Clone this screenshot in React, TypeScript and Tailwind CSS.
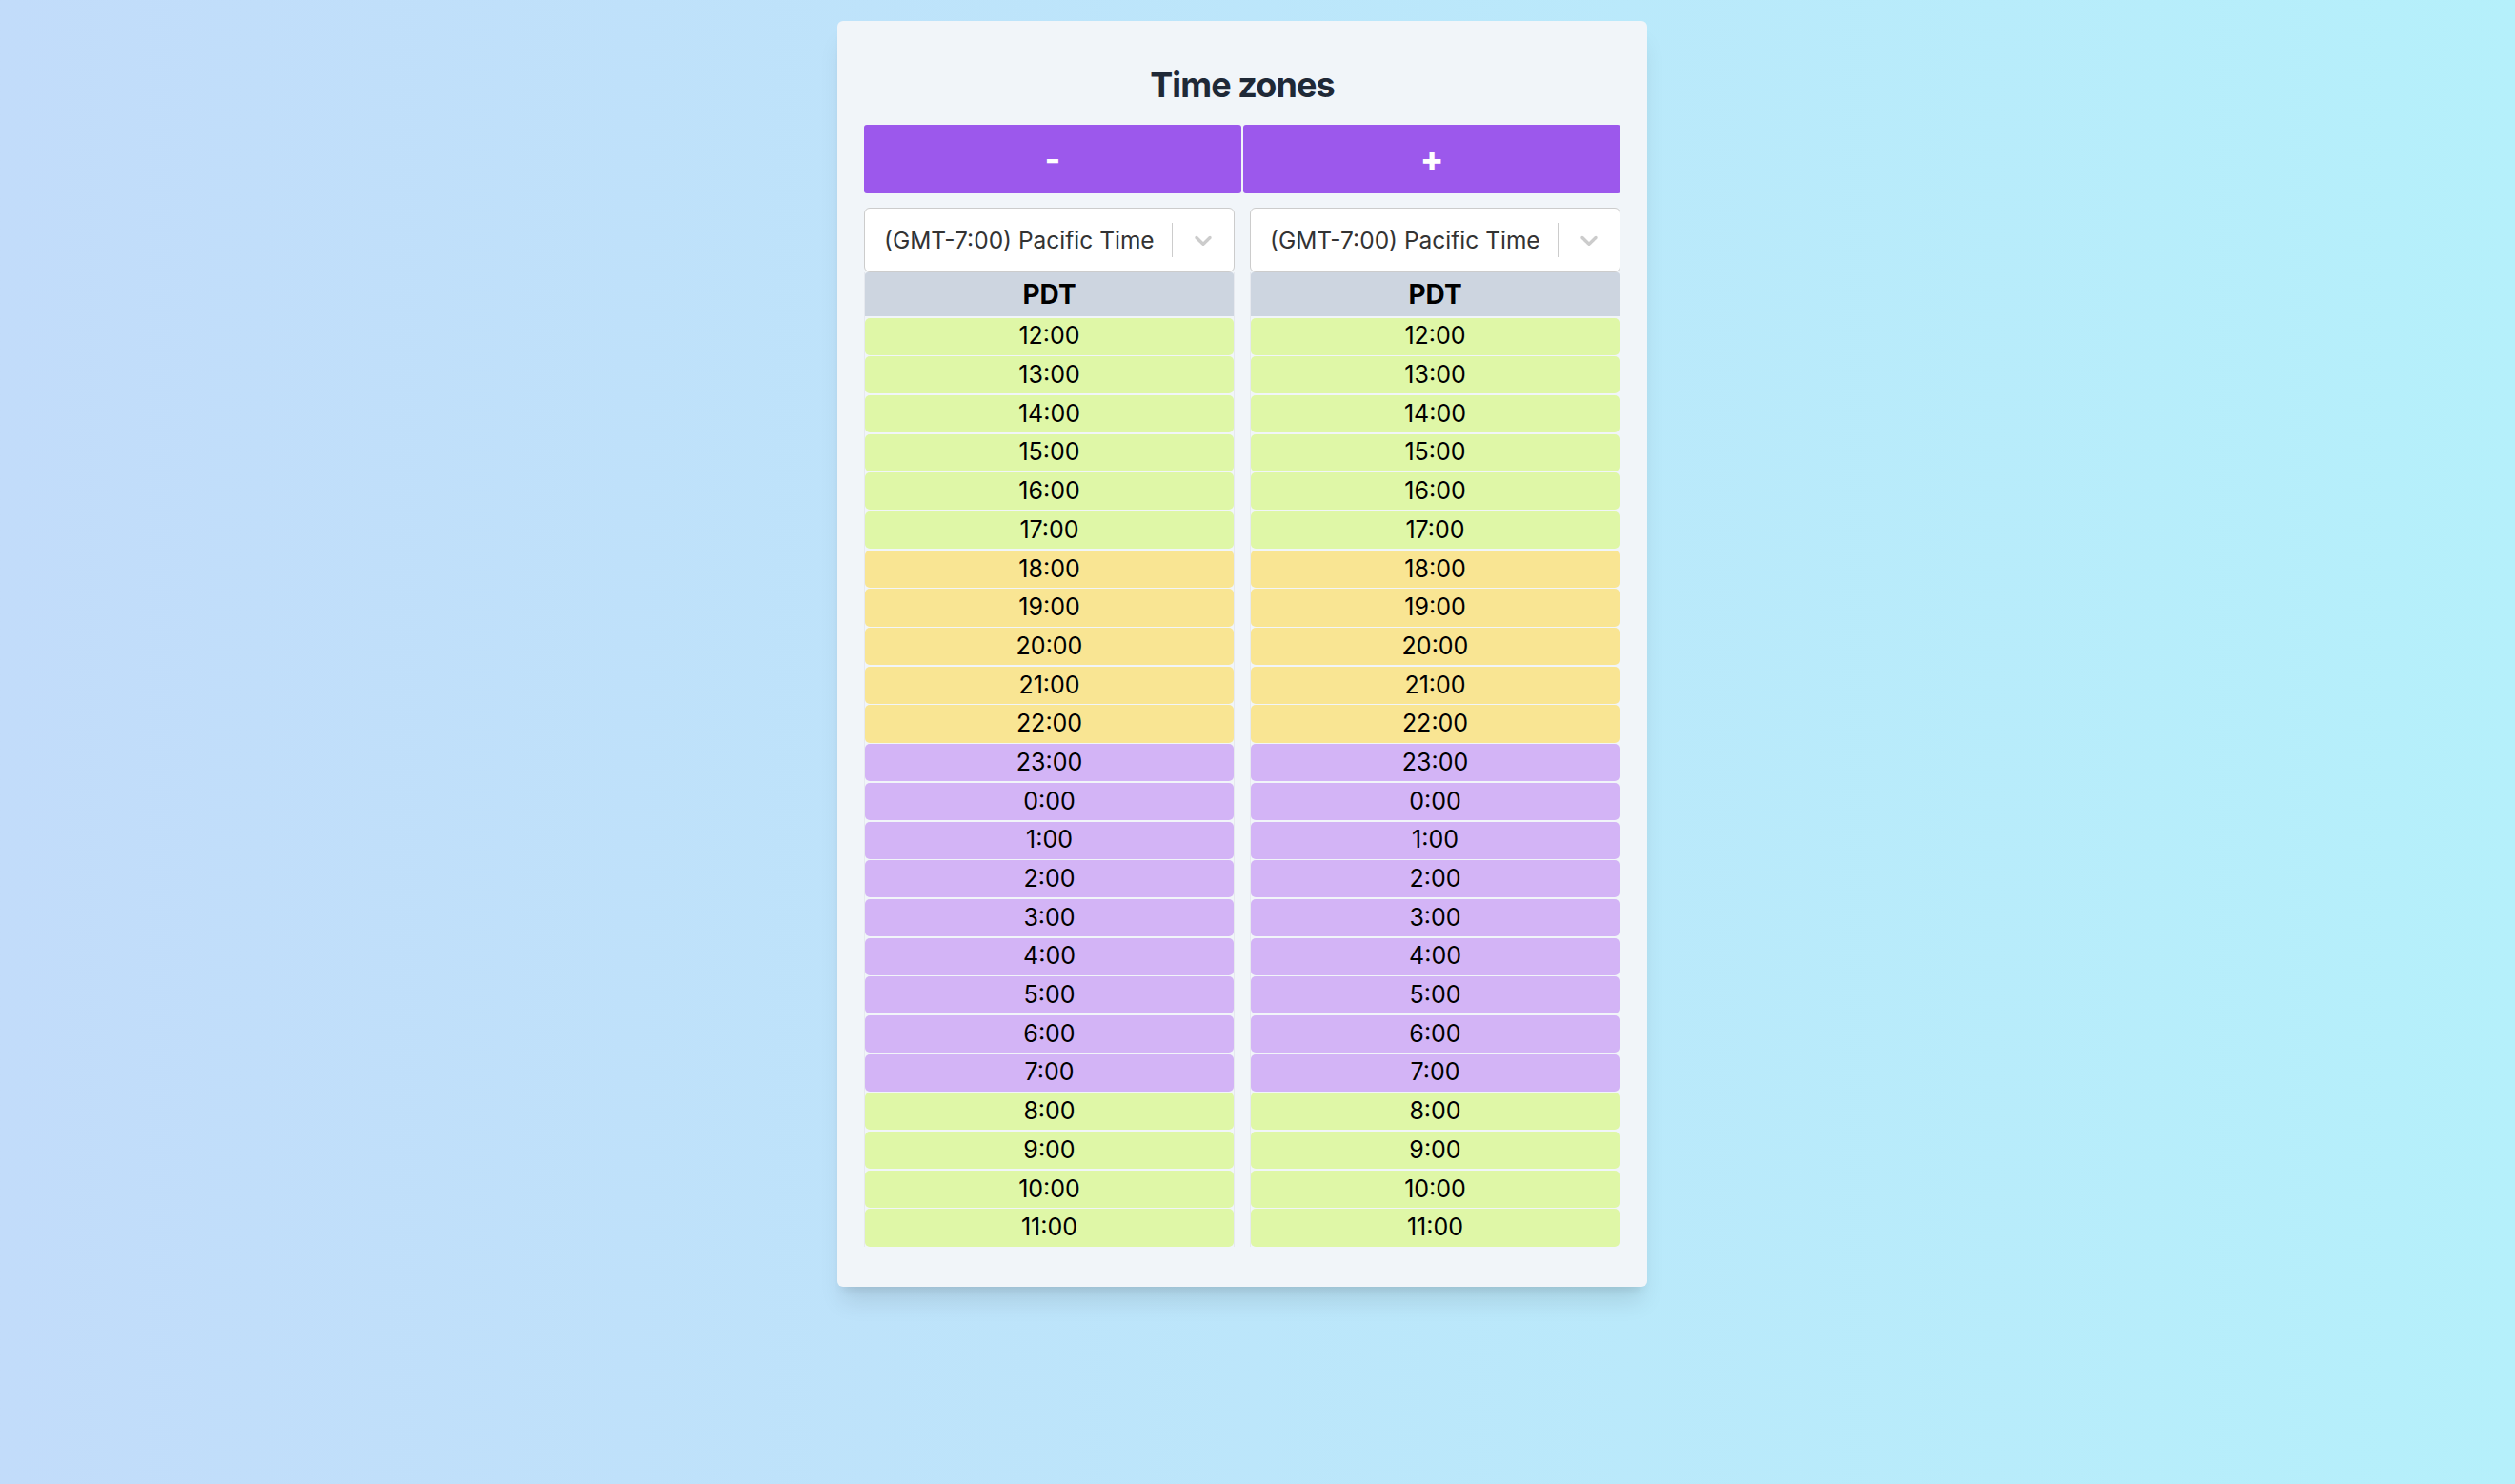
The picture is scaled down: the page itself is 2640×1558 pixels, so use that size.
import { useState } from 'react';

type Zone = { label: string; abbr: string; offset: number };

const zones: Zone[] = [{ label: '(GMT-7:00) Pacific Time', abbr: 'PDT', offset: -7 }];

// which band an hour falls in
const cellColor = (h: number) => {
  if (h >= 8 && h <= 17) return 'bg-[#dff7a7]';
  if (h >= 18 && h <= 22) return 'bg-[#f9e593]';
  return 'bg-[#d3b4f6]';
};

const Chevron = () => (
  <svg width="30" height="30" viewBox="0 0 20 20" fill="#cccccc" aria-hidden="true">
    <path d="M4.516 7.548c0.436-0.446 1.043-0.481 1.576 0l3.908 3.747 3.908-3.747c0.533-0.481 1.141-0.446 1.574 0 0.436 0.445 0.408 1.197 0 1.615-0.406 0.418-4.695 4.502-4.695 4.502-0.217 0.223-0.502 0.335-0.787 0.335s-0.57-0.112-0.789-0.335c0 0-4.287-4.084-4.695-4.502s-0.436-1.170 0-1.615z" />
  </svg>
);

const ZoneColumn = ({ zone, start }: { zone: Zone; start: number }) => {
  const hours = Array.from({ length: 24 }, (_, i) => (start + i) % 24);

  return (
    <div className="flex flex-col">
      {/* Select */}
      <div className="flex h-[68px] items-center rounded-md border-[1.5px] border-[#cccccc] bg-white">
        <div className="flex-1 truncate pl-5 text-[24.5px] text-[#333333]">{zone.label}</div>
        <div className="h-9 w-[1.5px] bg-[#cccccc]" />
        <div className="flex items-center px-[17px]">
          <Chevron />
        </div>
      </div>

      {/* Table */}
      <div className="flex flex-col gap-[1.6px] border-x border-[#e6e9ef]">
        <div className="flex h-[46px] items-center justify-center rounded-t-[3px] bg-[#cdd5e0] text-[28px] font-bold text-black">
          {zone.abbr}
        </div>
        {hours.map((h) => (
          <div
            key={h}
            className={`flex h-[39.1px] items-center justify-center rounded-[5px] text-[25px] text-black ${cellColor(h)}`}
          >
            {h}:00
          </div>
        ))}
      </div>
    </div>
  );
};

export default function App() {
  const [start, setStart] = useState(12);

  return (
    <div className="flex min-h-screen justify-center bg-gradient-to-r from-[#c2dcfa] to-[#b5f0fb] pr-8 pt-[22px] font-['Inter',sans-serif]">
      <div className="h-fit w-[850px] rounded-md bg-[#f1f5f9] px-7 pb-[42px] pt-[47px] shadow-xl">
        <h1 className="mb-[22px] text-center text-4xl leading-10 font-bold tracking-tight text-[#1f2937]">Time zones</h1>

        <div className="grid grid-cols-2 gap-[2px]">
          <button
            onClick={() => setStart((s) => (s + 23) % 24)}
            className="h-[72px] rounded-[3px] bg-[#9c58ec] text-4xl font-bold text-white"
          >
            -
          </button>
          <button
            onClick={() => setStart((s) => (s + 1) % 24)}
            className="h-[72px] rounded-[3px] bg-[#9c58ec] text-4xl font-extrabold text-white"
          >
            +
          </button>
        </div>

        <div className="mt-[15px] grid grid-cols-2 gap-4">
          <ZoneColumn zone={zones[0]} start={start} />
          <ZoneColumn zone={zones[0]} start={start} />
        </div>
      </div>
    </div>
  );
}
